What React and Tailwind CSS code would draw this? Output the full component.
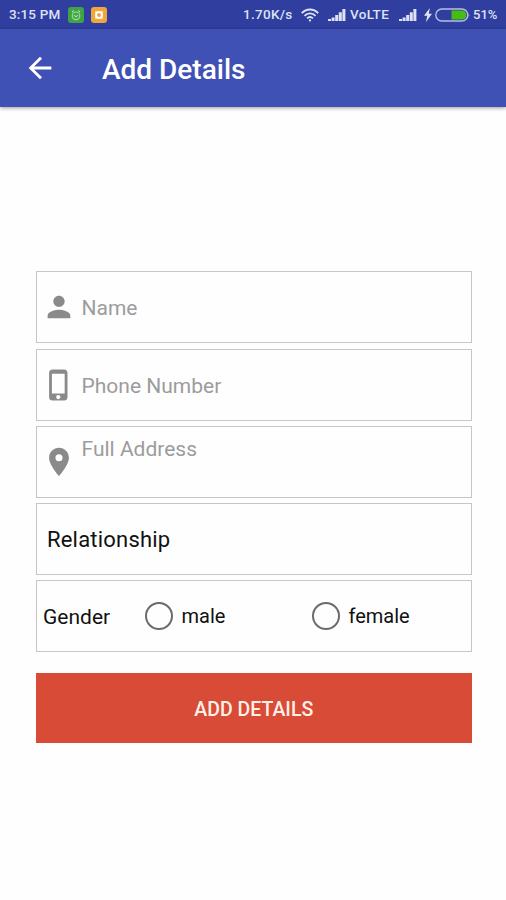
const ICONS = {
  person: 'M12 12c2.21 0 4-1.79 4-4s-1.79-4-4-4-4 1.79-4 4 1.79 4 4 4zm0 2c-2.67 0-8 1.34-8 4v2h16v-2c0-2.66-5.33-4-8-4z',
  phone: 'M15.5 1h-8A2.5 2.5 0 0 0 5 3.5v17A2.5 2.5 0 0 0 7.5 23h8a2.5 2.5 0 0 0 2.5-2.5v-17A2.5 2.5 0 0 0 15.5 1zm-4 21c-.83 0-1.5-.67-1.5-1.5s.67-1.5 1.5-1.5 1.5.67 1.5 1.5-.67 1.5-1.5 1.5zm4.5-4H7V4h9v14z',
  place: 'M12 2C8.13 2 5 5.13 5 9c0 5.25 7 13 7 13s7-7.75 7-13c0-3.87-3.13-7-7-7zm0 9.5a2.5 2.5 0 1 1 0-5 2.5 2.5 0 0 1 0 5z',
  back: 'M20 11H7.83l5.59-5.59L12 4l-8 8 8 8 1.41-1.41L7.83 13H20v-2z',
}

function Icon({ name, className }) {
  return (
    <svg viewBox="0 0 24 24" fill="currentColor" className={className}>
      <path d={ICONS[name]} />
    </svg>
  )
}

function Signal() {
  return (
    <svg viewBox="0 0 18 12" fill="currentColor" className="h-3 w-[18px] shrink-0">
      <path d="M0 10h3v2H0zM3.6 8.5h3V12h-3zM7.2 6h3v6h-3zM10.8 3.3h3V12h-3zM14.4 0h3v12h-3z" />
    </svg>
  )
}

function StatusBar() {
  return (
    <div className="flex h-[29px] shrink-0 items-center bg-[#303f9f] pl-[9px] text-[13.5px] font-medium leading-none text-[#dfe2f5]">
      <span className="w-[52px] whitespace-nowrap tracking-[0.15px]">3:15 PM</span>
      <svg viewBox="0 0 16 16" className="ml-[7px] size-4">
        <rect width="16" height="16" rx="3" fill="#3fa544" />
        <g fill="none" stroke="#a5dc9f" strokeWidth="1.1">
          <circle cx="8" cy="8.8" r="3.8" />
          <path d="M4 5l1.6-1.5M12 5l-1.6-1.5M6 8.2l2 1.6 2-1.6" />
        </g>
      </svg>
      <svg viewBox="0 0 16 16" className="ml-[7px] size-4">
        <rect width="16" height="16" rx="3" fill="#efa63c" />
        <path d="M4 4h8v8H4z" fill="#fbdca6" />
        <circle cx="8" cy="8" r="2.9" fill="#efa63c" stroke="#fff" strokeWidth="1.8" />
      </svg>
      <span className="ml-auto w-[50px] whitespace-nowrap tracking-[0.3px]">1.70K/s</span>
      <svg viewBox="0 0 18 14" fill="none" stroke="currentColor" strokeWidth="1.9" className="ml-[8px] h-[14px] w-[18px]">
        <path d="M.8 5.2C5.4.3 12.6.3 17.2 5.2M3.5 7.8c3.1-3.2 7.9-3.2 11 0M6.1 10.4c1.7-1.7 4.1-1.7 5.8 0" />
        <circle cx="9" cy="12.4" r="1.1" fill="currentColor" stroke="none" />
      </svg>
      <div className="ml-[9px] flex"><Signal /></div>
      <span className="ml-[4px] w-[41px] whitespace-nowrap tracking-[0.3px]">VoLTE</span>
      <div className="ml-2 flex"><Signal /></div>
      <svg viewBox="0 0 8 14" fill="currentColor" className="ml-[7px] h-[14px] w-2">
        <path d="M5.8 0L0 7.8h3.2L2 14l6-8.2H4.8z" />
      </svg>
      <svg viewBox="0 0 35 14" className="ml-[3px] h-[14px] w-[35px]">
        <rect x=".8" y="1" width="32" height="12" rx="6" fill="none" stroke="#b8bfe6" strokeWidth="1.4" />
        <path d="M33.6 4.5q1.4 2.5 0 5z" fill="#b8bfe6" />
        <path d="M16.5 2.4h10.3a4.6 4.6 0 0 1 0 9.2H16.5z" fill="#45bd12" />
      </svg>
      <span className="ml-[3px] w-[33px] whitespace-nowrap text-[13px]">51%</span>
    </div>
  )
}

function Field({ icon, top, children }) {
  return (
    <div className={`flex h-[72px] border-[1.5px] border-[#c6c6c6] pl-[5px] ${top ? 'items-start' : 'items-center'}`}>
      <Icon name={icon} className={`size-[34px] shrink-0 text-[#8a8a8a] ${top ? 'mt-[18px]' : ''}`} />
      <span className={`ml-[5.5px] text-[21px] leading-6 text-[#9c9c9c] ${top ? 'mt-[10px]' : 'mt-[2px]'}`}>{children}</span>
    </div>
  )
}

function Radio({ label, className }) {
  return (
    <label className={`flex items-center ${className}`}>
      <span className="size-7 shrink-0 rounded-full border-2 border-[#6b6b6b]" />
      <span className="ml-[8.5px] mt-px text-[20px] leading-6">{label}</span>
    </label>
  )
}

export default function App() {
  return (
    <div className="flex h-[900px] w-[506px] flex-col overflow-hidden bg-[#fefefe] font-[Roboto,sans-serif] text-[#111]">
      <StatusBar />
      <header className="flex h-[78px] shrink-0 items-center bg-[#3f51b5] pl-[23px] text-white shadow-[0_1px_4px_rgba(0,0,0,0.4)]">
        <Icon name="back" className="size-[34px]" />
        <h1 className="ml-[45px] mt-[3px] text-[28px] font-medium leading-8">Add Details</h1>
      </header>

      <main className="ml-9 mt-[164.3px] flex w-[435.5px] flex-col gap-[5.3px]">
        <Field icon="person">Name</Field>
        <Field icon="phone">Phone Number</Field>
        <Field icon="place" top>Full Address</Field>
        <div className="flex h-[72px] items-center border-[1.5px] border-[#c6c6c6] pl-[10px] pt-px text-[22px] tracking-[0.2px]">
          Relationship
        </div>
        <div className="flex h-[72px] items-center border-[1.5px] border-[#c6c6c6] pb-px pl-[6px]">
          <span className="mt-[3px] w-[102px] text-[21px]">Gender</span>
          <Radio label="male" className="w-[167px]" />
          <Radio label="female" />
        </div>
        <button className="mt-[15px] h-[70px] bg-[#d84b37] pt-[3px] text-[19.5px] font-medium text-[#fff0e8]">
          ADD DETAILS
        </button>
      </main>
    </div>
  )
}
